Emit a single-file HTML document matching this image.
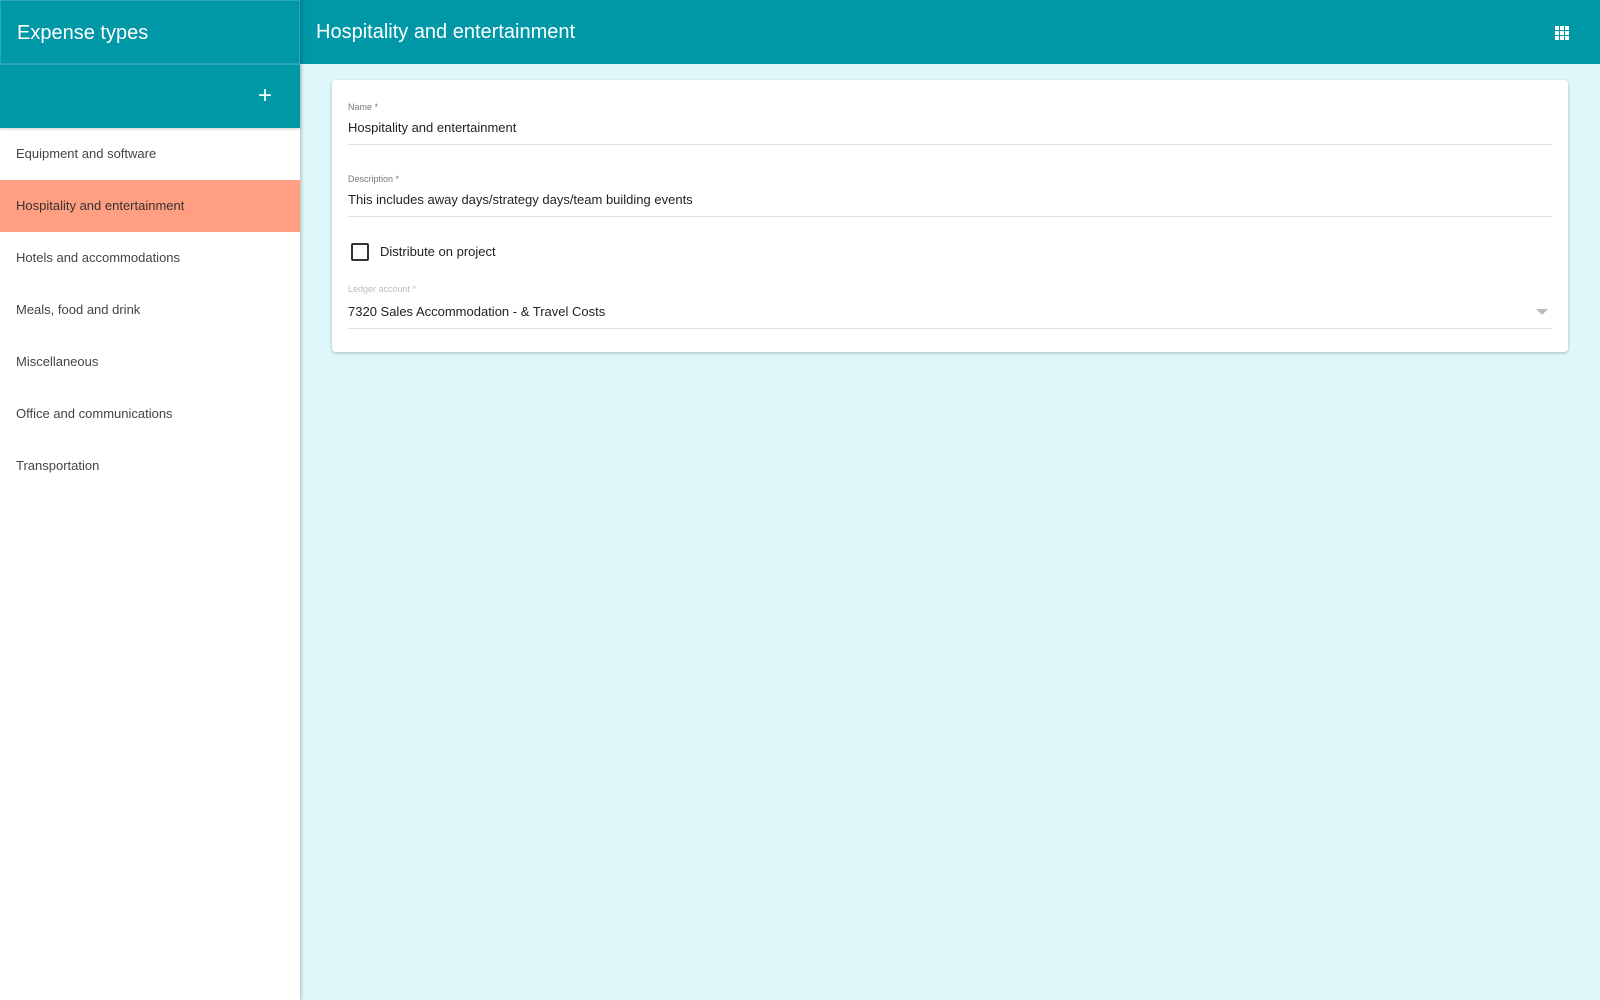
<!DOCTYPE html>
<html><head><style>
*{margin:0;padding:0;box-sizing:border-box}
body{width:1600px;height:1000px;overflow:hidden;font-family:"Liberation Sans",sans-serif;background:#e0f7fa;position:relative}
.side{position:absolute;left:0;top:0;width:300px;height:1000px;background:#fff;box-shadow:1px 0 4px rgba(0,0,0,.25);z-index:2}
.sh{height:64px;background:#0097a7;color:#fff;font-size:20px;padding:21px 16px;border:1px solid #2aa9b6}
.sb{height:64px;background:#0097a7;border-top:1px solid #2aa9b6;position:relative;box-shadow:0 1px 3px rgba(0,0,0,.2)}
.sb span{position:absolute;left:258px;top:17px;color:#fff;font-size:24px}
.it{height:52px;line-height:52px;padding-left:16px;font-size:13px;color:#444}
.it.sel{background:#ff9e80;color:#333}
.top{position:absolute;left:300px;top:0;right:0;height:64px;background:#0097a7;color:#fff;font-size:20px;padding:21px 16px}
.card{position:absolute;left:332px;top:80px;width:1236px;height:272px;background:#fff;border-radius:4px;box-shadow:0 1px 3px rgba(0,0,0,.25)}
.lab{position:absolute;left:16px;font-size:9px;color:#777}
.val{position:absolute;left:16px;font-size:13px;color:#222}
.ln{position:absolute;left:16px;right:16px;height:1px;background:#e0e0e0}
</style></head><body>
<div class="side">
<div class="sh">Expense types</div>
<div class="sb"><span>+</span></div>
<div class="it">Equipment and software</div>
<div class="it sel">Hospitality and entertainment</div>
<div class="it">Hotels and accommodations</div>
<div class="it">Meals, food and drink</div>
<div class="it">Miscellaneous</div>
<div class="it">Office and communications</div>
<div class="it">Transportation</div>
</div>
<div class="top">Hospitality and entertainment
<svg style="position:absolute;right:31px;top:26px" width="14" height="14" viewBox="0 0 14 14" fill="#fff"><rect x="0" y="0" width="4" height="4"/><rect x="5" y="0" width="4" height="4"/><rect x="10" y="0" width="4" height="4"/><rect x="0" y="5" width="4" height="4"/><rect x="5" y="5" width="4" height="4"/><rect x="10" y="5" width="4" height="4"/><rect x="0" y="10" width="4" height="4"/><rect x="5" y="10" width="4" height="4"/><rect x="10" y="10" width="4" height="4"/></svg></div>
<div class="card">
<div class="lab" style="top:22px">Name *</div>
<div class="val" style="top:40px">Hospitality and entertainment</div>
<div class="ln" style="top:64px"></div>
<div class="lab" style="top:94px">Description *</div>
<div class="val" style="top:112px">This includes away days/strategy days/team building events</div>
<div class="ln" style="top:136px"></div>
<div style="position:absolute;left:19px;top:163px;width:18px;height:18px;border:2px solid #333;border-radius:2px"></div>
<div class="val" style="left:48px;top:164px">Distribute on project</div>
<div class="lab" style="top:204px;color:#bbb">Ledger account *</div>
<div class="val" style="top:224px">7320 Sales Accommodation - &amp; Travel Costs</div>
<div style="position:absolute;right:20px;top:229px;width:0;height:0;border-left:6px solid transparent;border-right:6px solid transparent;border-top:6px solid #bbb"></div>
<div class="ln" style="top:248px"></div>
</div>
</body></html>
